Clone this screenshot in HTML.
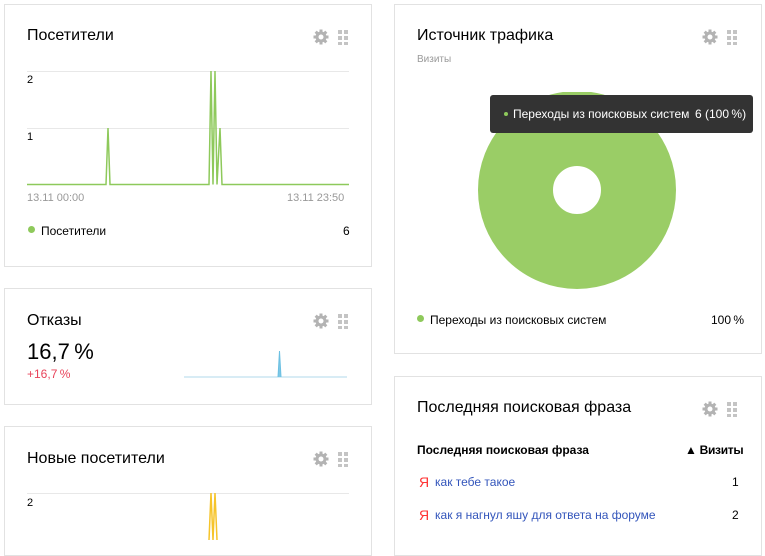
<!DOCTYPE html>
<html><head><meta charset="utf-8"><style>
body{margin:0;width:765px;height:536px;background:#fff;position:relative;overflow:hidden;font-family:"Liberation Sans","DejaVu Sans",sans-serif;color:#000}
.card{position:absolute;border:1px solid #e2e2e2;background:#fff;box-sizing:border-box}
.t{position:absolute;font-size:16px;white-space:nowrap}
.s{position:absolute;font-size:12px;white-space:nowrap}
.ic{position:absolute}
</style></head><body>
<svg width="0" height="0" style="position:absolute"><defs>
<g id="icons"><g fill="#b3b3b3"><circle cx="8" cy="8" r="5.5"/><g stroke="#b3b3b3" stroke-width="3"><line x1="8" y1="0.5" x2="8" y2="15.5"/><line x1="0.5" y1="8" x2="15.5" y2="8"/><line x1="2.7" y1="2.7" x2="13.3" y2="13.3"/><line x1="13.3" y1="2.7" x2="2.7" y2="13.3"/></g></g><circle cx="8" cy="8" r="2.5" fill="#fff"/>
<g fill="#c4c4c4"><rect x="25" y="1" width="4" height="4"/><rect x="31" y="1" width="4" height="4"/><rect x="25" y="7" width="4" height="4"/><rect x="31" y="7" width="4" height="4"/><rect x="25" y="13" width="4" height="3"/><rect x="31" y="13" width="4" height="3"/></g></g>
</defs></svg>

<div class="card" style="left:4px;top:4px;width:368px;height:263px"></div>
<div class="t" style="left:27px;top:27px">Посетители</div>
<svg class="ic" style="left:313px;top:29px" width="36" height="16"><use href="#icons"/></svg>
<svg class="ic" style="left:27px;top:65px" width="323" height="125">
<line x1="0" y1="6.5" x2="322" y2="6.5" stroke="#e8e8e8"/>
<line x1="0" y1="63.5" x2="322" y2="63.5" stroke="#e8e8e8"/>
<polyline fill="none" stroke="#8ec95b" stroke-width="1.5" points="0,119.5 79,119.5 81,63 83,119.5 182,119.5 184,6 186,119.5 188,6 190,119.5 193,63 195,119.5 322,119.5"/>
</svg>
<div class="s" style="left:27px;top:74px;font-size:11px">2</div>
<div class="s" style="left:27px;top:131px;font-size:11px">1</div>
<div class="s" style="left:27px;top:192px;font-size:11px;color:#999">13.11 00:00</div>
<div class="s" style="left:287px;top:192px;font-size:11px;color:#999">13.11 23:50</div>
<div style="position:absolute;left:28px;top:226px;width:7px;height:7px;border-radius:50%;background:#8ec95b"></div>
<div class="s" style="left:41px;top:224px">Посетители</div>
<div class="s" style="left:343px;top:224px">6</div>

<div class="card" style="left:4px;top:288px;width:368px;height:117px"></div>
<div class="t" style="left:27px;top:312px">Отказы</div>
<svg class="ic" style="left:313px;top:313px" width="36" height="16"><use href="#icons"/></svg>
<div class="t" style="left:27px;top:339px;font-size:22px">16,7&#8239;%</div>
<div class="s" style="left:27px;top:367px;color:#e8435a">+16,7&#8239;%</div>
<svg class="ic" style="left:184px;top:348px" width="164" height="32">
<line x1="0" y1="29" x2="163" y2="29" stroke="#cbe6f2" stroke-width="1.5"/>
<polyline fill="#7ec8e6" stroke="#6cc0e2" points="94,29 95.5,3 97,29"/>
</svg>

<div class="card" style="left:4px;top:426px;width:368px;height:130px"></div>
<div class="t" style="left:27px;top:450px">Новые посетители</div>
<svg class="ic" style="left:313px;top:451px" width="36" height="16"><use href="#icons"/></svg>
<svg class="ic" style="left:27px;top:490px" width="323" height="50">
<line x1="0" y1="3.5" x2="322" y2="3.5" stroke="#e8e8e8"/>
<polyline fill="none" stroke="#f6c42a" stroke-width="1.5" points="182,50 184,3 186,50 188,3 190,50"/>
</svg>
<div class="s" style="left:27px;top:497px;font-size:11px">2</div>

<div class="card" style="left:394px;top:4px;width:368px;height:350px"></div>
<div class="t" style="left:417px;top:27px">Источник трафика</div>
<svg class="ic" style="left:702px;top:29px" width="36" height="16"><use href="#icons"/></svg>
<div class="s" style="left:417px;top:54px;font-size:10px;color:#999">Визиты</div>
<svg class="ic" style="left:477px;top:92px" width="200" height="200">
<circle cx="100" cy="98" r="61.5" fill="none" stroke="#9acd66" stroke-width="75"/>
</svg>
<div style="position:absolute;left:490px;top:95px;width:263px;height:38px;background:#333;border-radius:3px"></div>
<div style="position:absolute;left:504px;top:112px;width:4px;height:4px;border-radius:50%;background:#8ec95b"></div>
<div class="s" style="left:513px;top:107px;color:#fff">Переходы из поисковых систем</div>
<div class="s" style="left:695px;top:107px;color:#fff;letter-spacing:-0.4px">6 (100&#8239;%)</div>
<div style="position:absolute;left:417px;top:315px;width:7px;height:7px;border-radius:50%;background:#8ec95b"></div>
<div class="s" style="left:430px;top:313px">Переходы из поисковых систем</div>
<div class="s" style="left:711px;top:313px">100&#8239;%</div>

<div class="card" style="left:394px;top:376px;width:368px;height:180px"></div>
<div class="t" style="left:417px;top:399px">Последняя поисковая фраза</div>
<svg class="ic" style="left:702px;top:401px" width="36" height="16"><use href="#icons"/></svg>
<div class="s" style="left:417px;top:443px;font-weight:bold;font-size:12px">Последняя поисковая фраза</div>
<div class="s" style="left:685px;top:443px;font-weight:bold;letter-spacing:-0.3px">▲ Визиты</div>
<div class="s" style="left:419px;top:474px;color:#f33;font-size:14px">Я</div>
<div class="s" style="left:435px;top:475px;color:#3355bb">как тебе такое</div>
<div class="s" style="left:732px;top:475px">1</div>
<div class="s" style="left:419px;top:507px;color:#f33;font-size:14px">Я</div>
<div class="s" style="left:435px;top:508px;color:#3355bb">как я нагнул яшу для ответа на форуме</div>
<div class="s" style="left:732px;top:508px">2</div>
</body></html>
